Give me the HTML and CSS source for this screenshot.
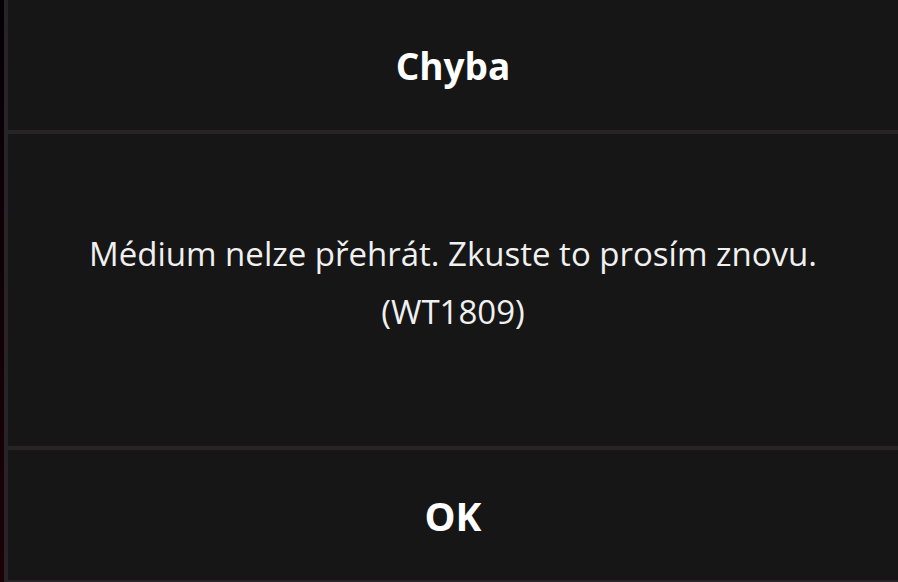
FILE: index.html
```html
<!DOCTYPE html>
<html lang="cs">
<head>
    <meta charset="UTF-8">
    <meta name="viewport" content="width=device-width, initial-scale=1.0">
    <title>Chyba</title>
    <link rel="stylesheet" href="styles.css">
</head>
<body>
    <div class="dialog">
        <div class="dialog-title">Chyba</div>
        <div class="dialog-body">
            <p>Médium nelze přehrát. Zkuste to prosím znovu.<br>(WT1809)</p>
        </div>
        <button class="dialog-btn">OK</button>
    </div>
</body>
</html>
```

FILE: styles.css
```css
* {
    margin: 0;
    padding: 0;
    box-sizing: border-box;
}

html, body {
    height: 100%;
}

body {
    font-family: 'Open Sans', 'DejaVu Sans', sans-serif;
    background: linear-gradient(180deg, #030004 0%, #1b0207 100%);
    padding-left: 4px;
    overflow: hidden;
    color: #fff;
}

.dialog {
    width: calc(100% + 20px);
    height: 582px;
    background: #161616;
    border-left: 4px solid #272326;
    border-bottom: 2px solid #272326;
    display: flex;
    flex-direction: column;
}

.dialog-title {
    height: 134px;
    border-bottom: 4px solid #272326;
    display: flex;
    align-items: center;
    justify-content: center;
    font-size: 37px;
    font-weight: 700;
    padding-right: 20px;
}

.dialog-body {
    height: 316px;
    border-bottom: 4px solid #272326;
    display: flex;
    align-items: center;
    justify-content: center;
    padding-right: 20px;
    padding-bottom: 14px;
}

.dialog-body p {
    font-size: 33px;
    line-height: 58px;
    text-align: center;
    color: #f0f0f0;
}

.dialog-btn {
    flex: 1;
    background: none;
    border: none;
    color: #fff;
    font-family: inherit;
    font-size: 39px;
    font-weight: 700;
    padding-right: 20px;
    cursor: pointer;
}
```
